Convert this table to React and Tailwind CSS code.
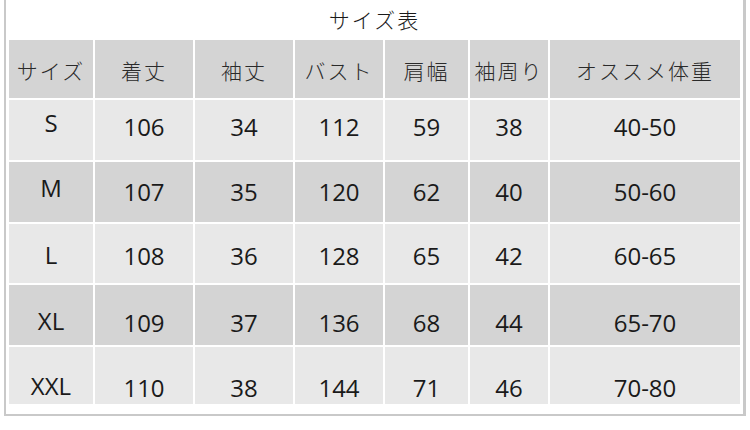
export default function App() {
  const font = { fontFamily: '"Open Sans", "Noto Sans CJK JP", sans-serif' };
  const headers = ["サイズ", "着丈", "袖丈", "バスト", "肩幅", "袖周り", "オススメ体重"];
  const widths = ["w-[84px]", "w-[98px]", "w-[98px]", "w-[88px]", "w-[83px]", "w-[78px]", "w-[190px]"];
  const rows = [
    { h: "h-[60px]", bg: "bg-[#e8e8e8]", p1: "pt-[11px]", p: "pt-[15px]", v: ["S", "106", "34", "112", "59", "38", "40-50"] },
    { h: "h-[60px]", bg: "bg-[#d4d4d4]", p1: "pt-[14px]", p: "pt-[18px]", v: ["M", "107", "35", "120", "62", "40", "50-60"] },
    { h: "h-[59px]", bg: "bg-[#e8e8e8]", p1: "pt-[19px]", p: "pt-[20px]", v: ["L", "108", "36", "128", "65", "42", "60-65"] },
    { h: "h-[60px]", bg: "bg-[#d4d4d4]", p1: "pt-[24px]", p: "pt-[26px]", v: ["XL", "109", "37", "136", "68", "44", "65-70"] },
    { h: "h-[57px]", bg: "bg-[#e8e8e8]", p1: "pt-[27px]", p: "pt-[29px]", v: ["XXL", "110", "38", "144", "71", "46", "70-80"] },
  ];
  return (
    <div className="w-[750px] h-[430px] bg-white" style={font}>
      <div className="ml-[4px] w-[742px] h-[416px] border-l-2 border-r-[3px] border-b-2 border-[#c9c9c9] flex flex-col">
        <div className="h-[40px] flex items-center justify-center text-[21px] font-light text-[#1a1a1a] tracking-[2px] pt-[2px]">
          サイズ表
        </div>
        <div className="ml-[3px] w-[731px] flex flex-col gap-[2px] bg-white">
          <div className="flex gap-[2px] h-[58px]">
            {headers.map((t, i) => (
              <div key={i} className={`${widths[i]} bg-[#d4d4d4] flex items-center justify-center pt-[6px] text-[21px] font-light text-[#2a2a2a] tracking-[2px]`}>
                {t}
              </div>
            ))}
          </div>
          {rows.map((r, ri) => (
            <div key={ri} className={`flex gap-[2px] ${r.h}`}>
              {r.v.map((t, i) => (
                <div
                  key={i}
                  className={`${widths[i]} ${r.bg} flex justify-center text-[24px] leading-[24px] text-[#1a1a1a] ${i === 0 ? r.p1 : r.p}`}
                >
                  {t}
                </div>
              ))}
            </div>
          ))}
        </div>
      </div>
    </div>
  );
}
